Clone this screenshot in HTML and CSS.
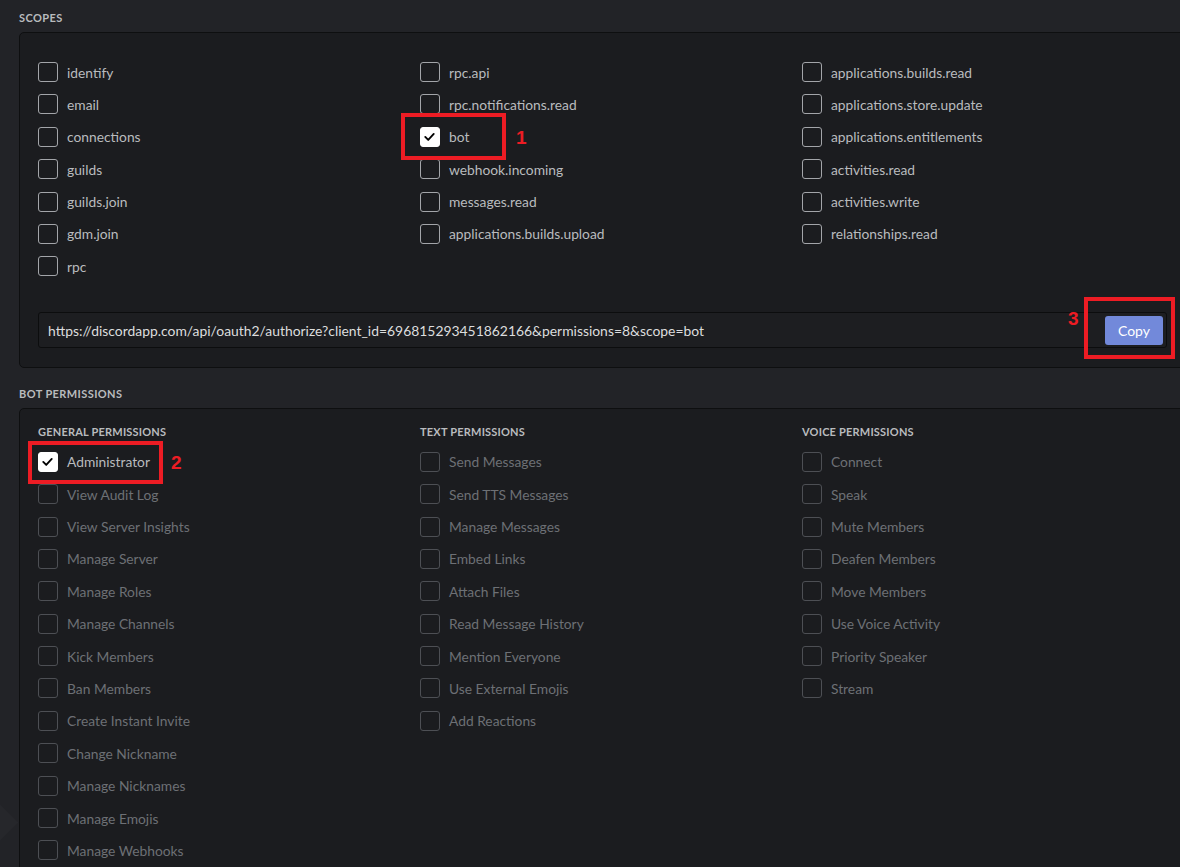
FILE: index.html
```html
<!DOCTYPE html>
<html lang="en">
	<head>
		<meta charset="utf-8">
		<title>OAuth2 URL Generator</title>
		<link rel="stylesheet" href="styles.css">
	</head>

	<body>
		<div class="page">
			<div class="deco"></div>

			<h5 class="section-title">Scopes</h5>
			<div class="panel scopes">
				<div class="columns">
					<div class="column">
						<label class="check"><span class="box"></span>identify</label>
						<label class="check"><span class="box"></span>email</label>
						<label class="check"><span class="box"></span>connections</label>
						<label class="check"><span class="box"></span>guilds</label>
						<label class="check"><span class="box"></span>guilds.join</label>
						<label class="check"><span class="box"></span>gdm.join</label>
						<label class="check"><span class="box"></span>rpc</label>
					</div>
					<div class="column">
						<label class="check"><span class="box"></span>rpc.api</label>
						<label class="check"><span class="box"></span>rpc.notifications.read</label>
						<label class="check checked"><span class="box"><svg viewBox="0 0 20 20"><polyline points="5,10.5 8.5,14 15,7"/></svg></span>bot</label>
						<label class="check"><span class="box"></span>webhook.incoming</label>
						<label class="check"><span class="box"></span>messages.read</label>
						<label class="check"><span class="box"></span>applications.builds.upload</label>
					</div>
					<div class="column">
						<label class="check"><span class="box"></span>applications.builds.read</label>
						<label class="check"><span class="box"></span>applications.store.update</label>
						<label class="check"><span class="box"></span>applications.entitlements</label>
						<label class="check"><span class="box"></span>activities.read</label>
						<label class="check"><span class="box"></span>activities.write</label>
						<label class="check"><span class="box"></span>relationships.read</label>
					</div>
				</div>
				<div class="url-box">
					<span class="url">https://discordapp.com/api/oauth2/authorize?client_id=696815293451862166&amp;permissions=8&amp;scope=bot</span>
					<button class="copy-button">Copy</button>
				</div>
			</div>

			<h5 class="section-title">Bot Permissions</h5>
			<div class="panel permissions">
				<div class="columns">
					<div class="column">
						<h6 class="group-title">General Permissions</h6>
						<label class="check checked"><span class="box"><svg viewBox="0 0 20 20"><polyline points="5,10.5 8.5,14 15,7"/></svg></span>Administrator</label>
						<label class="check disabled"><span class="box"></span>View Audit Log</label>
						<label class="check disabled"><span class="box"></span>View Server Insights</label>
						<label class="check disabled"><span class="box"></span>Manage Server</label>
						<label class="check disabled"><span class="box"></span>Manage Roles</label>
						<label class="check disabled"><span class="box"></span>Manage Channels</label>
						<label class="check disabled"><span class="box"></span>Kick Members</label>
						<label class="check disabled"><span class="box"></span>Ban Members</label>
						<label class="check disabled"><span class="box"></span>Create Instant Invite</label>
						<label class="check disabled"><span class="box"></span>Change Nickname</label>
						<label class="check disabled"><span class="box"></span>Manage Nicknames</label>
						<label class="check disabled"><span class="box"></span>Manage Emojis</label>
						<label class="check disabled"><span class="box"></span>Manage Webhooks</label>
					</div>
					<div class="column">
						<h6 class="group-title">Text Permissions</h6>
						<label class="check disabled"><span class="box"></span>Send Messages</label>
						<label class="check disabled"><span class="box"></span>Send TTS Messages</label>
						<label class="check disabled"><span class="box"></span>Manage Messages</label>
						<label class="check disabled"><span class="box"></span>Embed Links</label>
						<label class="check disabled"><span class="box"></span>Attach Files</label>
						<label class="check disabled"><span class="box"></span>Read Message History</label>
						<label class="check disabled"><span class="box"></span>Mention Everyone</label>
						<label class="check disabled"><span class="box"></span>Use External Emojis</label>
						<label class="check disabled"><span class="box"></span>Add Reactions</label>
					</div>
					<div class="column">
						<h6 class="group-title">Voice Permissions</h6>
						<label class="check disabled"><span class="box"></span>Connect</label>
						<label class="check disabled"><span class="box"></span>Speak</label>
						<label class="check disabled"><span class="box"></span>Mute Members</label>
						<label class="check disabled"><span class="box"></span>Deafen Members</label>
						<label class="check disabled"><span class="box"></span>Move Members</label>
						<label class="check disabled"><span class="box"></span>Use Voice Activity</label>
						<label class="check disabled"><span class="box"></span>Priority Speaker</label>
						<label class="check disabled"><span class="box"></span>Stream</label>
					</div>
				</div>
			</div>

			<!-- annotations -->
			<div class="mark mark-bot"></div>
			<span class="mark-num num-bot">1</span>
			<div class="mark mark-admin"></div>
			<span class="mark-num num-admin">2</span>
			<div class="mark mark-copy"></div>
			<span class="mark-num num-copy">3</span>
		</div>
	</body>
</html>
```

FILE: styles.css
```css
html, body {
	margin: 0;
	padding: 0;
	height: 100%;
	overflow: hidden;
	background-color: #222327;
}
.page {
	position: relative;
	padding-left: 19px;
	margin-right: -40px;
	font-family: Lato, "Open Sans", sans-serif;
}
.deco {
	position: absolute;
	left: -36px;
	top: 800px;
	width: 45px;
	height: 45px;
	background-color: #26272b;
	transform: rotate(45deg);
}
.section-title {
	position: relative;
	margin: 0;
	padding: 11px 0 7px 0;
	font-size: 11px;
	line-height: 14px;
	font-weight: 700;
	letter-spacing: .4px;
	text-transform: uppercase;
	color: #b9bbbe;
}
.panel {
	position: relative;
	background-color: #1b1c1f;
	border: 1px solid #0e0f10;
	border-radius: 5px;
}
.scopes {
	padding: 29px 19px 19px 18px;
	margin-bottom: 8px;
}
.permissions {
	padding: 16px 19px 40px 18px;
}
.columns {
	display: flex;
}
.column {
	width: 382px;
	display: flex;
	flex-direction: column;
	gap: 12.4px;
}
.group-title {
	margin: 0;
	font-size: 11px;
	line-height: 14px;
	font-weight: 700;
	letter-spacing: .2px;
	text-transform: uppercase;
	color: #b9bbbe;
	margin-bottom: 0;
}
.check {
	display: flex;
	align-items: center;
	gap: 9px;
	height: 20px;
	font-size: 13.8px;
	color: #b9bbbe;
	white-space: nowrap;
}
.box {
	box-sizing: border-box;
	width: 20px;
	height: 20px;
	flex: none;
	border: 1.5px solid #a3a5a9;
	border-radius: 3px;
}
.checked .box {
	background-color: #fff;
	border-color: #fff;
}
.box svg {
	display: block;
	width: 17px;
	height: 17px;
	fill: none;
	stroke: #000;
	stroke-width: 2.2;
	stroke-linecap: round;
	stroke-linejoin: round;
}
.disabled {
	color: #6d7075;
}
.disabled .box {
	border-color: #4d4f54;
}
.url-box {
	box-sizing: border-box;
	width: 1129px;
	height: 36px;
	margin-top: 36px;
	display: flex;
	align-items: center;
	justify-content: space-between;
	padding: 0 3px 0 9px;
	background-color: #1d1e21;
	border: 1px solid #0c0d0e;
	border-radius: 3px;
}
.url {
	font-size: 13.9px;
	color: #dcddde;
}
.copy-button {
	width: 58px;
	height: 29px;
	border: none;
	border-radius: 3px;
	background-color: #7289da;
	color: #fff;
	font-family: Lato, "Open Sans", sans-serif;
	font-size: 14px;
	padding: 0;
}
.mark {
	position: absolute;
	box-sizing: border-box;
	border: 4px solid #ed1c24;
}
.mark-bot {
	left: 401px;
	top: 113px;
	width: 105px;
	height: 47px;
}
.mark-admin {
	left: 28px;
	top: 441px;
	width: 135px;
	height: 43px;
}
.mark-copy {
	left: 1084px;
	top: 297px;
	width: 91px;
	height: 62px;
}
.mark-num {
	position: absolute;
	font-family: "Liberation Sans", sans-serif;
	font-weight: 700;
	font-size: 19px;
	line-height: 20px;
	color: #ed1c24;
}
.num-bot {
	left: 516px;
	top: 128px;
}
.num-admin {
	left: 171px;
	top: 453px;
}
.num-copy {
	left: 1068px;
	top: 309px;
}
```
